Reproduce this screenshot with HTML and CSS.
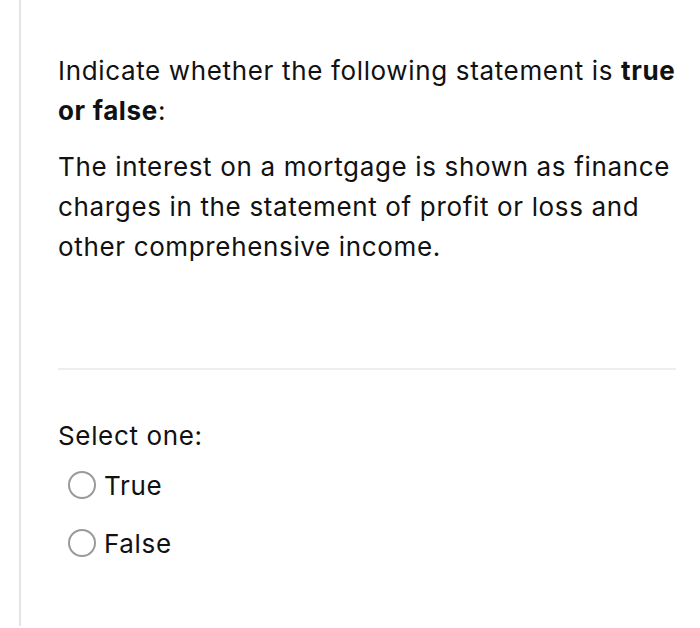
FILE: index.html
```
<!DOCTYPE html>
<html>
<head>
<meta charset="utf-8">
<link rel="stylesheet" href="styles.css">
</head>
<body>
<div class="page">
  <div class="question">
    <p class="prompt">Indicate whether the following statement is <b>true</b> <b>or false</b>:</p>
    <p class="statement">The interest on a mortgage is shown as finance charges in the statement of profit or loss and other comprehensive income.</p>
  </div>
  <hr class="divider">
  <div class="answer">
    <div class="select">Select one:</div>
    <label class="option"><span class="radio"></span><span class="label">True</span></label>
    <label class="option"><span class="radio"></span><span class="label">False</span></label>
  </div>
</div>
</body>
</html>
```
FILE: styles.css
```
html, body {
  margin: 0;
  padding: 0;
  background: #fff;
}
body {
  font-family: Inter, "Liberation Sans", sans-serif;
  color: #111;
  font-size: 26px;
  letter-spacing: 0.65px;
  width: 700px;
  height: 628px;
  overflow: hidden;
}
.page {
  margin-left: 19px;
  border-left: 2px solid #e4e4e4;
  height: 626px;
  padding-left: 37px;
  padding-right: 20px;
  padding-top: 51px;
  box-sizing: border-box;
}
.question p {
  margin: 0;
  line-height: 40px;
}
.statement {
  margin-top: 16px !important;
}
b { font-weight: 700; }
.divider {
  border: 0;
  height: 2px;
  background: #eeeeee;
  margin: 101px 4px 0 0;
}
.answer {
  padding-top: 46px;
}
.select {
  line-height: 40px;
}
.option {
  display: flex;
  align-items: center;
  gap: 8px;
  height: 58px;
  padding-left: 10px;
}
.radio {
  width: 24px;
  height: 24px;
  border: 2px solid #9a9a9a;
  border-radius: 50%;
  flex: none;
}
```
